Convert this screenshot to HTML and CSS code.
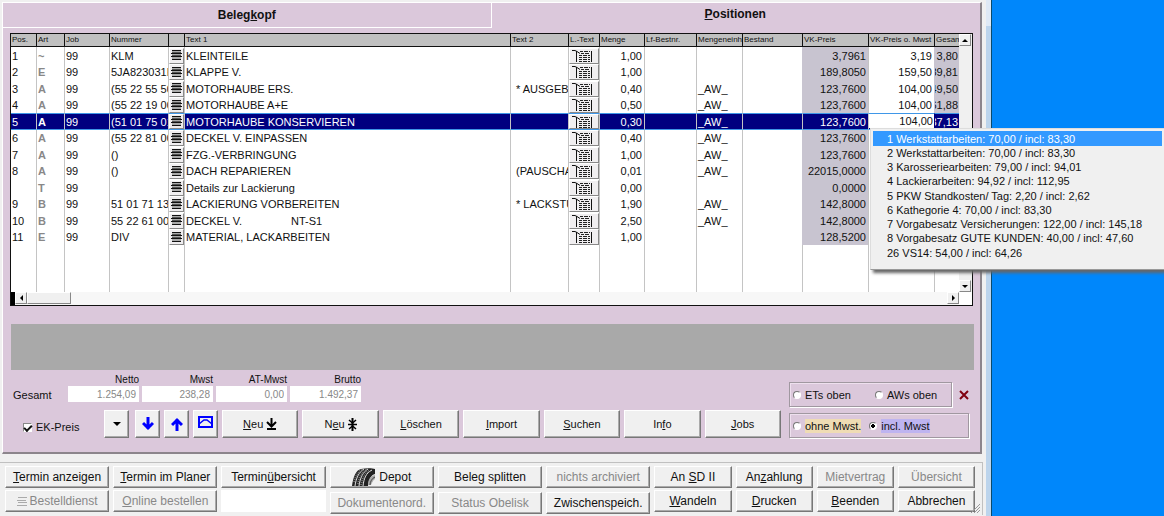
FILE: index.html
```html
<!DOCTYPE html>
<html lang="de">
<head>
<meta charset="utf-8">
<title>Positionen</title>
<link rel="stylesheet" href="styles.css">
</head>
<body>
<svg class="defs" aria-hidden="true">
  <symbol id="i-list" viewBox="0 0 11 11">
    <path fill="#aaa" d="M1 1h9v8H1z"/>
    <path fill="#111" d="M1 0h9v1H1zM0 3h11v1H0zM0 6h11v1H0zM1 9h9v1H1z"/>
    <path fill="#555" d="M1 2h9v1H1zM1 5h9v1H1z"/>
  </symbol>
  <symbol id="i-text" viewBox="0 0 20 12">
    <path fill="none" stroke="#111" d="M0 .5h3l2 1 3 2M4.500 1v11M19.500 1v11"/>
    <path fill="none" stroke="#222" stroke-dasharray="3 1 4 1 2 1" d="M8 1.500h10M9 3.500h9M7 5.500h11M7 7.500h11M7 9.500h11M7 11.500h11"/>
  </symbol>
</svg>
<div class="screen">
  <main class="window">
    <section class="panel">
      <div class="tabs" role="tablist">
        <button class="tab" role="tab">Beleg<u>k</u>opf</button>
        <button class="tab active" role="tab" aria-selected="true"><u>P</u>ositionen</button>
      </div>

      <div class="grid-frame">
        <table class="positions">
          <colgroup>
            <col class="c-pos"><col class="c-art"><col class="c-job"><col class="c-num"><col class="c-btn"><col>
            <col class="c-text2"><col class="c-ltext"><col class="c-menge"><col class="c-lf"><col class="c-einh">
            <col class="c-bestand"><col class="c-preis"><col class="c-preis"><col class="c-gesamt">
          </colgroup>
          <thead>
            <tr><th>Pos.</th><th>Art</th><th>Job</th><th>Nummer</th><th></th><th>Text 1</th><th>Text 2</th><th>L.-Text</th><th>Menge</th><th>Lf-Bestnr.</th><th>Mengeneinh</th><th>Bestand</th><th>VK-Preis</th><th>VK-Preis o. Mwst</th><th>Gesamt</th></tr>
          </thead>
          <tbody>
            <tr><td>1</td><td class="art">~</td><td>99</td><td>KLM</td><td class="tool"><button aria-label="Liste"><svg class="list"><use href="#i-list"/></svg></button></td><td>KLEINTEILE</td><td></td><td class="tool"><button aria-label="Langtext"><svg class="text"><use href="#i-text"/></svg></button></td><td class="num">1,00</td><td></td><td></td><td></td><td class="num shade">3,7961</td><td class="num">3,19</td><td class="shade"><span class="sum">3,80</span></td></tr>
            <tr><td>2</td><td class="art">E</td><td>99</td><td>5JA823031E</td><td class="tool"><button aria-label="Liste"><svg class="list"><use href="#i-list"/></svg></button></td><td>KLAPPE V.</td><td></td><td class="tool"><button aria-label="Langtext"><svg class="text"><use href="#i-text"/></svg></button></td><td class="num">1,00</td><td></td><td></td><td></td><td class="num shade">189,8050</td><td class="num">159,50</td><td class="shade"><span class="sum">189,81</span></td></tr>
            <tr><td>3</td><td class="art">A</td><td>99</td><td>(55 22 55 50)</td><td class="tool"><button aria-label="Liste"><svg class="list"><use href="#i-list"/></svg></button></td><td>MOTORHAUBE ERS.</td><td class="second">* AUSGEBAUT</td><td class="tool"><button aria-label="Langtext"><svg class="text"><use href="#i-text"/></svg></button></td><td class="num">0,40</td><td></td><td>_AW_</td><td></td><td class="num shade">123,7600</td><td class="num">104,00</td><td class="shade"><span class="sum">49,50</span></td></tr>
            <tr><td>4</td><td class="art">A</td><td>99</td><td>(55 22 19 00)</td><td class="tool"><button aria-label="Liste"><svg class="list"><use href="#i-list"/></svg></button></td><td>MOTORHAUBE A+E</td><td></td><td class="tool"><button aria-label="Langtext"><svg class="text"><use href="#i-text"/></svg></button></td><td class="num">0,50</td><td></td><td>_AW_</td><td></td><td class="num shade">123,7600</td><td class="num">104,00</td><td class="shade"><span class="sum">61,88</span></td></tr>
            <tr class="selected"><td>5</td><td class="art">A</td><td>99</td><td>(51 01 75 01)</td><td class="tool"><button aria-label="Liste"><svg class="list"><use href="#i-list"/></svg></button></td><td>MOTORHAUBE KONSERVIEREN</td><td></td><td class="tool"><button aria-label="Langtext"><svg class="text"><use href="#i-text"/></svg></button></td><td class="num">0,30</td><td></td><td>_AW_</td><td></td><td class="num shade">123,7600</td><td class="edit"><input type="text" value="104,00" aria-label="VK-Preis o. Mwst">
              <div class="menu" role="menu">
                <button class="current" role="menuitem">1 Werkstattarbeiten: 70,00 / incl: 83,30</button>
                <button role="menuitem">2 Werkstattarbeiten: 70,00 / incl: 83,30</button>
                <button role="menuitem">3 Karosseriearbeiten: 79,00 / incl: 94,01</button>
                <button role="menuitem">4 Lackierarbeiten: 94,92 / incl: 112,95</button>
                <button role="menuitem">5 PKW Standkosten/ Tag: 2,20 / incl: 2,62</button>
                <button role="menuitem">6 Kathegorie 4: 70,00 / incl: 83,30</button>
                <button role="menuitem">7 Vorgabesatz Versicherungen: 122,00 / incl: 145,18</button>
                <button role="menuitem">8 Vorgabesatz GUTE KUNDEN: 40,00 / incl: 47,60</button>
                <button role="menuitem">26 VS14: 54,00 / incl: 64,26</button>
              </div></td><td class="shade"><span class="sum">37,13</span></td></tr>
            <tr><td>6</td><td class="art">A</td><td>99</td><td>(55 22 81 00)</td><td class="tool"><button aria-label="Liste"><svg class="list"><use href="#i-list"/></svg></button></td><td>DECKEL V. EINPASSEN</td><td></td><td class="tool"><button aria-label="Langtext"><svg class="text"><use href="#i-text"/></svg></button></td><td class="num">0,40</td><td></td><td>_AW_</td><td></td><td class="num shade">123,7600</td><td></td><td class="shade"></td></tr>
            <tr><td>7</td><td class="art">A</td><td>99</td><td>()</td><td class="tool"><button aria-label="Liste"><svg class="list"><use href="#i-list"/></svg></button></td><td>FZG.-VERBRINGUNG</td><td></td><td class="tool"><button aria-label="Langtext"><svg class="text"><use href="#i-text"/></svg></button></td><td class="num">1,00</td><td></td><td>_AW_</td><td></td><td class="num shade">123,7600</td><td></td><td class="shade"></td></tr>
            <tr><td>8</td><td class="art">A</td><td>99</td><td>()</td><td class="tool"><button aria-label="Liste"><svg class="list"><use href="#i-list"/></svg></button></td><td>DACH REPARIEREN</td><td class="second">(PAUSCHAL)</td><td class="tool"><button aria-label="Langtext"><svg class="text"><use href="#i-text"/></svg></button></td><td class="num">0,01</td><td></td><td>_AW_</td><td></td><td class="num shade">22015,0000</td><td></td><td class="shade"></td></tr>
            <tr><td></td><td class="art">T</td><td>99</td><td></td><td class="tool"><button aria-label="Liste"><svg class="list"><use href="#i-list"/></svg></button></td><td>Details zur Lackierung</td><td></td><td class="tool"><button aria-label="Langtext"><svg class="text"><use href="#i-text"/></svg></button></td><td class="num">0,00</td><td></td><td></td><td></td><td class="num shade">0,0000</td><td></td><td class="shade"></td></tr>
            <tr><td>9</td><td class="art">B</td><td>99</td><td>51 01 71 13</td><td class="tool"><button aria-label="Liste"><svg class="list"><use href="#i-list"/></svg></button></td><td>LACKIERUNG VORBEREITEN</td><td class="second">* LACKSTUFE</td><td class="tool"><button aria-label="Langtext"><svg class="text"><use href="#i-text"/></svg></button></td><td class="num">1,90</td><td></td><td>_AW_</td><td></td><td class="num shade">142,8000</td><td></td><td class="shade"></td></tr>
            <tr><td>10</td><td class="art">B</td><td>99</td><td>55 22 61 00</td><td class="tool"><button aria-label="Liste"><svg class="list"><use href="#i-list"/></svg></button></td><td>DECKEL V.                NT-S1</td><td></td><td class="tool"><button aria-label="Langtext"><svg class="text"><use href="#i-text"/></svg></button></td><td class="num">2,50</td><td></td><td>_AW_</td><td></td><td class="num shade">142,8000</td><td></td><td class="shade"></td></tr>
            <tr><td>11</td><td class="art">E</td><td>99</td><td>DIV</td><td class="tool"><button aria-label="Liste"><svg class="list"><use href="#i-list"/></svg></button></td><td>MATERIAL, LACKARBEITEN</td><td></td><td class="tool"><button aria-label="Langtext"><svg class="text"><use href="#i-text"/></svg></button></td><td class="num">1,00</td><td></td><td></td><td></td><td class="num shade">128,5200</td><td></td><td class="shade"></td></tr>
            <tr class="filler"><td></td><td></td><td></td><td></td><td></td><td></td><td></td><td></td><td></td><td></td><td></td><td></td><td></td><td></td><td></td></tr>
          </tbody>
        </table>
        <div class="vscroll">
          <button aria-label="Nach oben"><svg viewBox="0 0 6 3" width="6" height="3"><path d="M0 3l3-3 3 3z"/></svg></button>
          <button aria-label="Nach unten"><svg viewBox="0 0 6 3" width="6" height="3"><path d="M0 0h6L3 3z"/></svg></button>
        </div>
        <div class="hscroll">
          <button aria-label="Nach links"><svg viewBox="0 0 3 6" width="3" height="6"><path d="M3 0v6L0 3z"/></svg></button>
          <div class="thumb"></div>
          <button class="last" aria-label="Nach rechts"><svg viewBox="0 0 3 6" width="3" height="6"><path d="M0 0v6l3-3z"/></svg></button>
        </div>
      </div>

      <div class="message-bar"></div>

      <div class="controls">
        <div class="left">
          <div class="totals">
            <span class="total-title">Gesamt</span>
            <label>Netto<input type="text" value="1.254,09" readonly></label>
            <label>Mwst<input type="text" value="238,28" readonly></label>
            <label>AT-Mwst<input type="text" value="0,00" readonly></label>
            <label>Brutto<input type="text" value="1.492,37" readonly></label>
          </div>
          <div class="toolbar">
            <label class="check"><input type="checkbox" checked>EK-Preis</label>
            <button class="btn icon first" aria-label="Auswahl"><svg viewBox="0 0 8 4" width="8" height="4"><path d="M0 0h8L4 4z"/></svg></button>
            <button class="btn icon" aria-label="Nach unten"><svg viewBox="0 0 12 14" width="12" height="14"><path fill="none" stroke="#00f" stroke-width="3" d="M6 0v12M1 6l5 5 5-5"/></svg></button>
            <button class="btn icon" aria-label="Nach oben"><svg viewBox="0 0 12 14" width="12" height="14"><path fill="none" stroke="#00f" stroke-width="3" d="M6 14V2M1 8l5-5 5 5"/></svg></button>
            <button class="btn icon picture" aria-label="Bild"><svg viewBox="0 0 15 12" width="15" height="12"><path fill="none" stroke="#00f" stroke-width="2" d="M1 1h13v10H1z"/><path fill="none" stroke="#00f" stroke-width="1.500" d="M1 8l5-4h3l5 4"/></svg></button>
            <button class="btn"><span><u>N</u>eu</span><svg viewBox="0 0 11 12" width="11" height="12"><path fill="none" stroke="#000" stroke-width="2" d="M5.500 0v9M1 4l4.500 4.500L10 4M1 11h9"/></svg></button>
            <button class="btn"><span>N<u>e</u>u</span><svg viewBox="0 0 9 13" width="9" height="13"><path fill="none" stroke="#000" stroke-width="2" d="M4.500 0v13"/><path fill="none" stroke="#000" stroke-width="1.500" d="M1 2l3.500 3L8 2M0 6.500h9M1 11l3.500-3L8 11"/></svg></button>
            <button class="btn"><span><u>L</u>öschen</span></button>
            <button class="btn"><span><u>I</u>mport</span></button>
            <button class="btn"><span><u>S</u>uchen</span></button>
            <button class="btn"><span>In<u>f</u>o</span></button>
            <button class="btn"><span><u>J</u>obs</span></button>
          </div>
        </div>
        <div class="right">
          <div class="order-row">
            <fieldset class="options">
              <label><input type="radio" name="order"><span>ETs oben</span></label>
              <label><input type="radio" name="order"><span>AWs oben</span></label>
            </fieldset>
            <button class="clear" aria-label="Zurücksetzen"><svg viewBox="0 0 10 10" width="10" height="10"><path fill="none" stroke="#800010" stroke-width="2" d="M1 1l8 8M9 1L1 9"/></svg></button>
          </div>
          <fieldset class="options tax">
            <label><input type="radio" name="tax"><span class="without">ohne Mwst.</span></label>
            <label><input type="radio" name="tax" checked><span class="with">incl. Mwst</span></label>
          </fieldset>
        </div>
      </div>
    </section>

    <footer class="actions">
      <button class="btn"><span><u>T</u>ermin anzeigen</span></button>
      <button class="btn"><span><u>T</u>ermin im Planer</span></button>
      <button class="btn"><span>Termin<u>ü</u>bersicht</span></button>
      <button class="btn"><svg viewBox="0 0 24 18" width="24" height="18">
        <path fill="#222" d="M0 18C1 9 4 2 9 1c5-1 11-1 14 0v5c-4 1-6 5-7 12z"/>
        <path fill="none" stroke="#e6e6e6" d="M3 18C4 10 7 4 12 1M7 18C8 10 11 4 16 1M11 18C12 10 14 5 20 2"/>
        <path fill="none" stroke="#777" stroke-dasharray="1 1" stroke-width="2" d="M2 14C4 7 6 4 10 2M6 16C7 9 10 4 14 2M9 17C11 9 13 5 18 2"/>
        <path fill="#aaa" d="M16 17c0-5 2-9 7-10v4c-2 1-3 4-4 6z"/>
        <path fill="none" stroke="#444" d="M18 17c0-3 2-7 5-8"/>
      </svg><span>Depot</span></button>
      <button class="btn"><span>Beleg splitten</span></button>
      <button class="btn" disabled><span>nichts archiviert</span></button>
      <button class="btn"><span>An <u>S</u>D II</span></button>
      <button class="btn"><span>An<u>z</u>ahlung</span></button>
      <button class="btn" disabled><span>Mietvertrag</span></button>
      <button class="btn" disabled><span>Übersicht</span></button>

      <button class="btn" disabled><svg viewBox="0 0 10 9" width="10" height="9"><path fill="none" stroke="#aaa" d="M1 .5h9M0 3.500h9M1 5.500h9M0 8.500h10"/></svg><span>Bestelldienst</span></button>
      <button class="btn" disabled><span><u>O</u>nline bestellen</span></button>
      <input type="text" aria-label="Suche">
      <button class="btn low" disabled><span>Dokumentenord.</span></button>
      <button class="btn low" disabled><span>Status Obelisk</span></button>
      <button class="btn low"><span>Zwischenspeich.</span></button>
      <button class="btn"><span><u>W</u>andeln</span></button>
      <button class="btn"><span><u>D</u>rucken</span></button>
      <button class="btn"><span><u>B</u>eenden</span></button>
      <button class="btn"><span>Abbrechen</span></button>
      <svg class="grip" viewBox="0 0 9 9" width="9" height="9"><path fill="none" stroke="#999" d="M0 9l9-9M3 9l6-6M6 9l3-3"/></svg>
    </footer>
  </main>
  <div class="frame-edge"></div>
  <aside class="desktop"></aside>
</div>
</body>
</html>
```
FILE: styles.css
```css
* { box-sizing: border-box; }

body {
  margin: 0;
  background: #f0f0f0;
  color: #111;
  font: 11px/14px "Liberation Sans", Arial, sans-serif;
}

button, input { font: inherit; color: inherit; }
button { margin: 0; padding: 0; }
svg { flex: none; display: block; }
.defs { position: absolute; width: 0; height: 0; }

.screen { display: flex; min-height: 100vh; }
.window { flex: 1; min-width: 0; padding-top: 2px; }

.frame-edge {
  width: 6px;
  background: linear-gradient(#dfe9f5 26px, #bcd4ec 26px);
  border-right: 1px solid #0a4a6c;
}

.desktop { width: 172px; background: #0087fb; }

/* Panel and tabs */
.panel {
  margin: 0 4px 8px 2px;
  background: #dbc8db;
  border: 1px solid #fff;
  border-right: 2px solid #8c858c;
  border-bottom: 2px solid #8c858c;
}

.tabs { display: flex; }
.tab {
  flex: 1;
  height: 25px;
  background: none;
  border: 0;
  border-right: 1px solid #fff;
  border-bottom: 1px solid #fff;
  font-size: 12px;
  font-weight: bold;
}
.tab.active { border-color: transparent; padding-bottom: 2px; }

/* Position list */
.grid-frame {
  display: grid;
  grid-template-columns: 1fr 13px;
  margin: 5px 7px 18px;
  border: 1px solid #111;
  background: #fff;
}

.positions {
  width: 100%;
  table-layout: fixed;
  border-collapse: separate;
  border-spacing: 0;
}
.c-pos { width: 25px; }
.c-art { width: 28px; }
.c-job { width: 45px; }
.c-num { width: 59px; }
.c-btn { width: 16px; }
.c-text2 { width: 58px; }
.c-ltext { width: 31px; }
.c-menge { width: 45px; }
.c-lf { width: 52px; }
.c-einh { width: 46px; }
.c-bestand { width: 60px; }
.c-preis { width: 66px; }
.c-gesamt { width: 25px; }

th {
  height: 13px;
  padding: 0 0 0 1px;
  background: #c0c0c0;
  border-left: 1px solid #111;
  border-bottom: 1px solid #111;
  font-size: 8px;
  line-height: 12px;
  font-weight: normal;
  text-align: left;
  white-space: nowrap;
  overflow: hidden;
}
th:first-child, td:first-child { border-left: 0; }

td {
  height: 16px;
  padding: 0 0 0 1px;
  border-left: 1px solid #c4c4c4;
  white-space: pre;
  overflow: hidden;
  line-height: 14px;
}
tr:nth-child(odd) td { height: 17px; }
.art { color: #888; font-weight: bold; }
.num { padding: 0 2px 0 0; text-align: right; }
.second { padding-left: 5px; }
.shade { background: #c8c4d0; border-color: #c8c4d0; }
.sum { display: flex; justify-content: flex-end; overflow: hidden; margin-left: -1px; padding-right: 1px; }

.tool { padding: 0; }
.tool button {
  display: flex;
  align-items: center;
  justify-content: center;
  width: 100%;
  height: 16px;
  background: #f0eef0;
  border: 1px solid;
  border-color: #fff #888 #888 #fff;
}
.list { width: 11px; height: 11px; }
.text { width: 20px; height: 12px; margin-right: 4px; }

tbody .selected td {
  background: #000080;
  color: #fff;
  border-top: 1px solid #3f97e8;
  border-bottom: 1px solid #3f97e8;
}
.selected .tool button { height: 15px; color: #111; }
.selected .shade { border-left-color: #c4c4c4; }
.selected .shade:last-child { border-left-color: #000080; }
tbody .selected .edit {
  position: relative;
  padding: 0;
  overflow: visible;
  background: #fff;
  white-space: nowrap;
}
.edit input {
  display: block;
  width: 100%;
  height: 14px;
  padding: 0 1px 0 0;
  border: 0;
  border-bottom: 1px solid #000080;
  background: #fff;
  color: #111;
  text-align: right;
}
tbody .filler td { height: 47px; }

/* Hourly rate menu */
.menu {
  position: absolute;
  z-index: 5;
  top: 14px;
  left: 1px;
  width: 294px;
  padding: 2px 2px 9px;
  background: #f0f0f0;
  border-top: 1px solid #ddd;
  border-left: 1px solid #ddd;
  border-bottom: 1px solid #999;
  box-shadow: 3px 3px 3px #666;
}
.menu button {
  display: block;
  width: 100%;
  height: 14px;
  padding-left: 14px;
  border: 0;
  background: none;
  color: #111;
  text-align: left;
  line-height: 14px;
}
.menu button:nth-child(4n + 1) { height: 15px; }
.menu .current { background: #3399ff; color: #fff; }

/* Scroll bars */
.vscroll {
  display: flex;
  flex-direction: column;
  justify-content: space-between;
  background: #f0f0f0;
}
.vscroll button, .hscroll button, .thumb {
  display: flex;
  align-items: center;
  justify-content: center;
  width: 12px;
  height: 12px;
  background: #f0f0f0;
  border: 1px solid;
  border-color: #fff #888 #888 #fff;
}
.hscroll {
  display: flex;
  height: 13px;
  background: #f7f7f7;
  border-left: 4px solid #000;
}
.hscroll .thumb { width: 44px; }
.hscroll .last { margin-left: auto; }

.message-bar { height: 46px; margin: 0 6px 0 8px; background: #a9a9a9; }

/* Totals and tools */
.controls {
  display: flex;
  align-items: flex-end;
  gap: 8px;
  padding: 3px 11px 14px 8px;
}
.left { flex: 1; min-width: 0; }
.right { width: 180px; }

.totals { display: flex; align-items: flex-end; gap: 3px; margin-bottom: 8px; }
.total-title { width: 54px; padding-left: 2px; }
.totals label {
  width: 71px;
  font-size: 10px;
  line-height: 13px;
  text-align: right;
}
.totals input {
  display: block;
  width: 100%;
  height: 16px;
  padding: 0 3px;
  border: 0;
  background: #fff;
  color: #888;
  text-align: right;
}

.toolbar { display: flex; gap: 4px; }
.check { display: flex; align-items: center; width: 89px; padding: 6px 0 0 12px; gap: 4px; }
.check input {
  appearance: none;
  width: 9px;
  height: 9px;
  margin: 0;
  background: #fff;
  border: 1px solid;
  border-color: #888 #fff #fff #888;
}
.check input:checked::after {
  content: "";
  display: block;
  width: 6px;
  height: 3px;
  margin-top: 1px;
  border: solid #111;
  border-width: 0 0 2px 2px;
  transform: rotate(-45deg);
}

.btn {
  display: flex;
  align-items: center;
  justify-content: center;
  gap: 3px;
  min-width: 0;
  background: #f0f0f0;
  border: 1px solid;
  border-color: #fff #777 #777 #fff;
  box-shadow: inset -1px -1px #aaa;
  white-space: nowrap;
}
.btn:disabled { color: #888; }
.toolbar .btn { flex: 1; height: 28px; }
.toolbar .icon { flex: none; width: 25px; }
.toolbar .first { margin-right: 2px; }
.toolbar .picture { padding-bottom: 4px; }

.order-row { display: flex; align-items: center; gap: 7px; margin-bottom: 6px; }
.order-row .options { flex: 1; }
.clear { width: 10px; height: 10px; background: none; border: 0; }
.options {
  display: flex;
  gap: 24px;
  min-width: 0;
  height: 25px;
  margin: 0;
  padding: 0 3px;
  border: 1px solid #a098a0;
  box-shadow: 1px 1px #fff, inset 1px 1px #eee0ee;
  align-items: center;
}
.tax { gap: 8px; }
.options label { display: flex; align-items: center; gap: 4px; white-space: nowrap; }
.options input {
  appearance: none;
  width: 8px;
  height: 8px;
  margin: 0;
  border-radius: 50%;
  background: #fff;
  border: 1px solid;
  border-color: #777 #fff #fff #777;
}
.options input:checked { background: radial-gradient(#000 2px, #fff 2px); }
.without { background: #efdcb4; }
.with { background: #beb4f0; }

/* Footer actions */
.actions {
  position: relative;
  display: grid;
  grid-template-columns: repeat(6, 104fr) repeat(4, 77fr);
  gap: 2px 4px;
  margin-right: 3px;
  padding: 3px 7px 1px 5px;
  border: solid #c0c0c0;
  border-width: 1px 1px 0 0;
  font-size: 12px;
}
.actions .btn, .actions input { height: 22px; }
.actions input { width: 100%; min-width: 0; padding: 0 4px; border: 0; background: #fff; }
.actions .low { margin-top: 2px; }
.grip { position: absolute; right: 2px; bottom: 2px; }
```
